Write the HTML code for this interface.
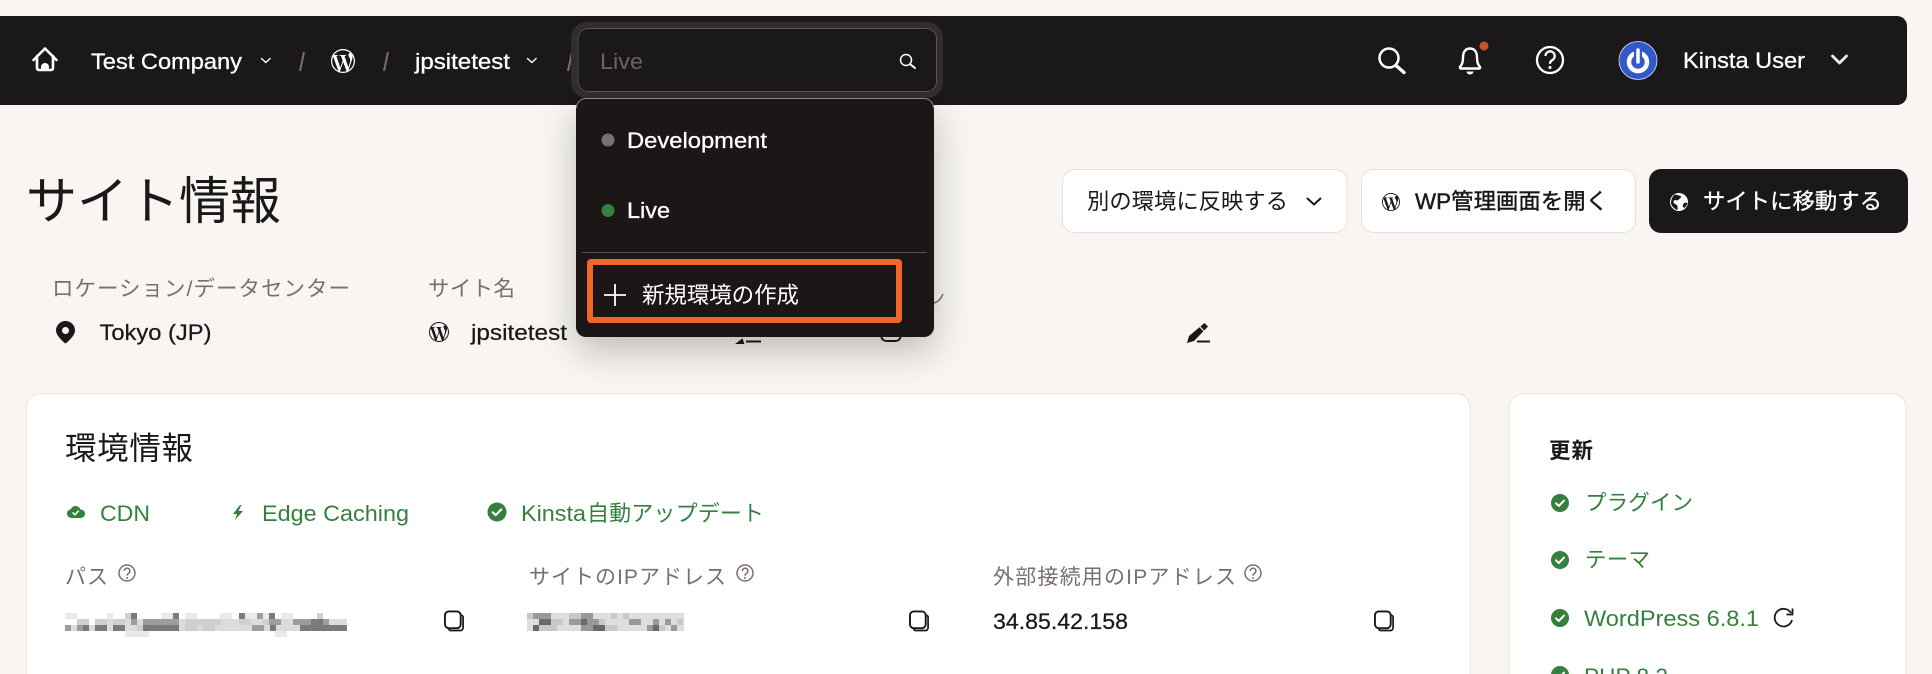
<!DOCTYPE html>
<html lang="ja">
<head>
<meta charset="utf-8">
<title>サイト情報</title>
<style>
html,body{margin:0;padding:0;background:#f8f5f2;width:1932px;height:674px;overflow:hidden}
svg{display:block}
text{font-family:"Liberation Sans","Noto Sans CJK JP",sans-serif}
.w{fill:#fff}
.d{fill:#1a1819}
.g{fill:#34803c}
.m{fill:#7a6e6e}
.bw{stroke:#fff;stroke-width:.3}
.bd{stroke:#1a1819;stroke-width:.25}
.bg{stroke:#34803c;stroke-width:.2}
.bm{stroke:#1a1819;stroke-width:.45}
</style>
</head>
<body>
<svg xmlns="http://www.w3.org/2000/svg" width="1932" height="674" viewBox="0 0 1932 674">
<defs>
<symbol id="wp" viewBox="0 0 24 24"><path fill="currentColor" d="M21.469 6.825c.84 1.537 1.318 3.3 1.318 5.175 0 3.979-2.156 7.456-5.363 9.325l3.295-9.527c.615-1.54.82-2.771.82-3.864 0-.405-.026-.78-.07-1.11m-7.981.105c.647-.03 1.232-.105 1.232-.105.582-.075.514-.93-.067-.899 0 0-1.755.135-2.88.135-1.064 0-2.85-.15-2.85-.15-.585-.03-.661.855-.075.885 0 0 .54.061 1.125.09l1.68 4.605-2.37 7.08L5.354 6.9c.649-.03 1.234-.1 1.234-.1.585-.075.516-.93-.065-.896 0 0-1.746.138-2.874.138-.2 0-.438-.008-.69-.015C4.911 3.15 8.235 1.215 12 1.215c2.809 0 5.365 1.072 7.286 2.833-.046-.003-.091-.009-.141-.009-1.06 0-1.812.923-1.812 1.914 0 .89.513 1.643 1.06 2.531.411.72.89 1.643.89 2.977 0 .915-.354 1.994-.821 3.479l-1.075 3.585-3.9-11.61.001.014zM12 22.784c-1.059 0-2.081-.153-3.048-.437l3.237-9.406 3.315 9.087c.024.053.05.101.078.149-1.12.393-2.325.609-3.582.609M1.211 12c0-1.564.336-3.05.935-4.39L7.29 21.709C3.694 19.96 1.212 16.271 1.211 12M12 0C5.385 0 0 5.385 0 12s5.385 12 12 12 12-5.385 12-12S18.615 0 12 0"/></symbol>
<symbol id="copy" viewBox="0 0 22 22"><path d="M5 18.5v.5a2 2 0 0 0 2 2h10a3 3 0 0 0 3-3V7a2 2 0 0 0-2-2" fill="none" stroke="#1a1819" stroke-width="1.8"/><rect x="1" y="1" width="16.5" height="17.5" rx="4" fill="none" stroke="#1a1819" stroke-width="2"/></symbol>
<symbol id="chk" viewBox="0 0 18 18"><circle cx="9" cy="9" r="9" fill="#34803c"/><path d="M5 9.3l2.8 2.7L13 6.6" fill="none" stroke="#fff" stroke-width="2" stroke-linecap="round" stroke-linejoin="round"/></symbol>
<symbol id="q" viewBox="0 0 18 18"><circle cx="9" cy="9" r="8" fill="none" stroke="#7a6e6e" stroke-width="1.5"/><path d="M6.3 7a2.8 2.8 0 1 1 4.4 2.3c-1 .7-1.7 1.2-1.7 2.3" fill="none" stroke="#7a6e6e" stroke-width="1.5"/><circle cx="9" cy="14" r="1" fill="#7a6e6e"/></symbol>
<filter id="sh" x="-30%" y="-30%" width="160%" height="170%"><feDropShadow dx="0" dy="14" stdDeviation="18" flood-color="#000" flood-opacity=".24"/></filter>
<clipPath id="frame"><rect width="1932" height="674"/></clipPath>
</defs>

<rect width="1932" height="674" fill="#f8f5f2"/>

<!-- nav -->
<path d="M0 16H1897a10 10 0 0 1 10 10V95a10 10 0 0 1-10 10H0z" fill="#1a1819"/>
<g fill="none" stroke="#fff" stroke-width="2.6" stroke-linecap="round" stroke-linejoin="round">
<path d="M33.5 60L45 48.5 56.5 60"/>
<path d="M37 56v12a2 2 0 0 0 2 2h12a2 2 0 0 0 2-2V56"/>
</g>
<path d="M41 70v-3a4 4 0 0 1 8 0v3z" class="w"/>
<text x="91" y="69" font-size="22.500" class="w bw" textLength="151" lengthAdjust="spacingAndGlyphs">Test Company</text>
<path d="M261.500 58.500l4.300 4 4.300-4" fill="none" stroke="#fff" stroke-width="1.400" stroke-linecap="round" stroke-linejoin="round"/>
<path d="M304 52l-4 19M388 52l-4 19" stroke="#7a6e6e" stroke-width="2"/>
<use href="#wp" x="331" y="49" width="24" height="24" color="#fff"/>
<text x="415" y="69" font-size="22.500" class="w bw" textLength="95" lengthAdjust="spacingAndGlyphs">jpsitetest</text>
<path d="M527.500 58.500l4.300 4 4.300-4" fill="none" stroke="#fff" stroke-width="1.400" stroke-linecap="round" stroke-linejoin="round"/>
<path d="M572 52l-4 19" stroke="#7a6e6e" stroke-width="2"/>

<!-- input -->
<rect x="574" y="25" width="366" height="70" rx="13" fill="#1a1819" stroke="#322d2e" stroke-width="6"/>
<rect x="578" y="28.500" width="358.500" height="63" rx="10" fill="#1a1819" stroke="#5f5555" stroke-width="1"/>
<text x="600" y="69" font-size="22.500" fill="#6e6262" textLength="43" lengthAdjust="spacingAndGlyphs">Live</text>
<circle cx="906" cy="60" r="5.500" fill="none" stroke="#fff" stroke-width="1.500"/>
<path d="M910.500 64.500l4.500 3.500" stroke="#fff" stroke-width="2" stroke-linecap="round"/>

<!-- right nav -->
<circle cx="1389" cy="58" r="9.500" fill="none" stroke="#fff" stroke-width="2.500"/>
<path d="M1396 65.500l8 7" stroke="#fff" stroke-width="3.400" stroke-linecap="round"/>
<path d="M1470 48.500c-5 0-7 4-7 9 0 5-1 7-3 9.500-.5.800 0 1.500 1 1.500h18c1 0 1.500-.7 1-1.500-2-2.500-3-4.500-3-9.500 0-5-2-9-7-9z" fill="none" stroke="#fff" stroke-width="2.400" stroke-linejoin="round"/>
<path d="M1466.500 71.500h7a3.500 3 0 0 1-7 0z" class="w"/>
<circle cx="1484" cy="46" r="4.500" fill="#c8502a"/>
<circle cx="1550" cy="60" r="13" fill="none" stroke="#fff" stroke-width="2.300"/>
<path d="M1545.500 56a4.600 4.600 0 1 1 7.300 3.700c-1.800 1.200-2.800 2-2.800 4" fill="none" stroke="#fff" stroke-width="2.300"/>
<circle cx="1550" cy="67.500" r="1.500" class="w"/>
<circle cx="1638" cy="60.500" r="19" fill="#3358c8" stroke="#dfe3f2" stroke-width=".8"/>
<circle cx="1638" cy="62" r="9" fill="none" stroke="#fff" stroke-width="4.500"/>
<path d="M1638 47v11" stroke="#3358c8" stroke-width="8"/>
<path d="M1638 50v12" stroke="#fff" stroke-width="3.500" stroke-linecap="round"/>
<text x="1683" y="68" font-size="22.500" class="w bw" textLength="122" lengthAdjust="spacingAndGlyphs">Kinsta User</text>
<path d="M1832.500 56l7 7 7-7" fill="none" stroke="#eee8e4" stroke-width="2.800" stroke-linecap="round" stroke-linejoin="round"/>

<!-- title -->
<text x="26" y="219" font-size="51" class="d" textLength="255">サイト情報</text>

<!-- labels -->
<text x="52" y="296" font-size="21.500" class="m" textLength="298">ロケーション/データセンター</text>
<text x="428" y="296" font-size="21.500" class="m" textLength="87">サイト名</text>
<path d="M65.500 321c-5 0-9.500 4-9.500 9.500 0 6 9.500 13 9.500 13s9.500-7 9.500-13c0-5.500-4.500-9.500-9.500-9.500z" class="d"/>
<circle cx="65.500" cy="330.500" r="3.500" fill="#f8f5f2"/>
<text x="99.500" y="340" font-size="22.500" class="d bd" textLength="112" lengthAdjust="spacingAndGlyphs">Tokyo (JP)</text>
<use href="#wp" x="429" y="322" width="20" height="20" color="#1a1819"/>
<text x="471" y="340" font-size="22.500" class="d bd" textLength="96" lengthAdjust="spacingAndGlyphs">jpsitetest</text>

<!-- fragments behind dropdown -->
<path d="M738 343l4-3 1 3zM746 341.500h15" stroke="#1a1819" stroke-width="2" fill="#1a1819"/>
<path d="M881 336c1 4 3 5 6 5h8c3 0 5-1 6-5" stroke="#1a1819" stroke-width="2" fill="none"/>
<path d="M934 303c4-1 7-4 9-9" stroke="#7a6e6e" stroke-width="1.500" fill="none"/>

<!-- edit icon -->
<path d="M1204.500 323l3.500 3.500-14 14.500-7 2 2-7z" class="d"/>
<path d="M1199.500 326.500l4.500 4.500" stroke="#f8f5f2" stroke-width="1.200"/>
<path d="M1197 341.500h13" stroke="#1a1819" stroke-width="2"/>

<!-- buttons -->
<rect x="1062.500" y="169.500" width="284.500" height="63" rx="12" fill="#fff" stroke="#e9e0da"/>
<text x="1087" y="209" font-size="22.300" class="d" textLength="201">別の環境に反映する</text>
<path d="M1307.500 198.500l6.500 6 6.500-6" fill="none" stroke="#1a1819" stroke-width="2" stroke-linecap="round" stroke-linejoin="round"/>
<rect x="1361.500" y="169.500" width="274" height="63" rx="12" fill="#fff" stroke="#e9e0da"/>
<use href="#wp" x="1382" y="193" width="18" height="18" color="#1a1819"/>
<text x="1415" y="209" font-size="22.300" class="d bm" textLength="193">WP管理画面を開く</text>
<rect x="1649" y="169" width="259" height="64" rx="12" fill="#1a1819"/>
<circle cx="1679" cy="202" r="9" class="w"/>
<path d="M1675 194.500c2 1 5 .5 6 2 .5 1.500-2 2-2.500 3.500-1 1-3-.5-4.500.5-1 1-.5 3 1 3.500 1.500.5 2.500 1 2.500 3 0 1.500.5 2.500-.5 3-3-1.500-5-3.500-6-6.500 0-4 1.500-7.500 4-9z M1684 203c1.500-.5 3-.5 3.500 0-.5 2-1.500 4-3.500 5-1.500-1-1.500-4 0-5z" fill="#1a1819"/>
<text x="1703" y="209" font-size="22.300" class="w bw" textLength="179">サイトに移動する</text>

<!-- card 1 -->
<path d="M26.500 674V407.500a14 14 0 0 1 14-14H1456a14 14 0 0 1 14 14V674" fill="#fff" stroke="#ede4de"/>
<text x="65" y="459" font-size="31.500" class="d" textLength="128">環境情報</text>

<path d="M72 518c-3 0-5-2-5-4.500 0-2 1.500-3.700 3.500-4 1-2 2.700-3.500 5-3.500s4.200 1.300 5 3.500c2.500 0 4.500 2 4.500 4.300 0 2.500-2 4.200-4.500 4.200z" class="g"/>
<path d="M72.500 512.500l2.300 2.200 4-4" fill="none" stroke="#fff" stroke-width="1.500"/>
<text x="100" y="521" font-size="22.500" class="g" textLength="50" lengthAdjust="spacingAndGlyphs">CDN</text>
<path d="M240 505l-7 9h4l-2 6 8-9h-4.500l3-6z" class="g"/>
<text x="262" y="521" font-size="22.500" class="g" textLength="147" lengthAdjust="spacingAndGlyphs">Edge Caching</text>
<use href="#chk" x="487.500" y="502.500" width="19" height="19"/>
<text x="521" y="521" font-size="22.500" class="g" textLength="65" lengthAdjust="spacingAndGlyphs">Kinsta</text>
<text x="587" y="521" font-size="22" class="g" textLength="177">自動アップデート</text>

<text x="65" y="584" font-size="21" class="m" textLength="43">パス</text>
<use href="#q" x="118" y="564" width="18" height="18"/>
<text x="529" y="584" font-size="21" class="m" textLength="197">サイトのIPアドレス</text>
<use href="#q" x="736" y="564" width="18" height="18"/>
<text x="993" y="584" font-size="21" class="m" textLength="243">外部接続用のIPアドレス</text>
<use href="#q" x="1244" y="564" width="18" height="18"/>

<!-- mosaic 1 -->
<g shape-rendering="crispEdges">
<rect x="107" y="619" width="240" height="12" fill="#dcdcdc"/>
<rect x="65" y="625" width="42" height="6" fill="#dcdcdc"/>
<g fill="#eaeaea"><rect x="65" y="613" width="12" height="6"/><rect x="107" y="613" width="6" height="6"/><rect x="161" y="613" width="12" height="6"/><rect x="185" y="613" width="12" height="6"/><rect x="220" y="613" width="12" height="6"/><rect x="245" y="613" width="12" height="6"/><rect x="263" y="613" width="6" height="6"/><rect x="281" y="613" width="12" height="6"/><rect x="125" y="631" width="24" height="6"/><rect x="275" y="631" width="12" height="6"/></g>
<g fill="#cfcfcf"><rect x="125" y="613" width="6" height="6"/><rect x="317" y="613" width="6" height="6"/><rect x="77" y="619" width="12" height="6"/><rect x="95" y="619" width="12" height="6"/><rect x="113" y="619" width="12" height="6"/><rect x="185" y="619" width="36" height="6"/><rect x="239" y="619" width="12" height="6"/><rect x="263" y="619" width="12" height="6"/><rect x="137" y="625" width="6" height="6"/><rect x="185" y="625" width="12" height="6"/><rect x="203" y="625" width="12" height="6"/></g>
<g fill="#9d9d9d"><rect x="257" y="613" width="6" height="6"/><rect x="131" y="619" width="6" height="6"/><rect x="143" y="619" width="36" height="6"/><rect x="269" y="619" width="12" height="6"/><rect x="293" y="619" width="36" height="6"/><rect x="65" y="625" width="6" height="6"/><rect x="77" y="625" width="6" height="6"/><rect x="252" y="625" width="12" height="6"/></g>
<g fill="#7a7a7a"><rect x="131" y="613" width="6" height="6"/><rect x="173" y="613" width="6" height="6"/><rect x="239" y="613" width="6" height="6"/><rect x="269" y="613" width="6" height="6"/><rect x="311" y="619" width="12" height="6"/><rect x="83" y="625" width="6" height="6"/><rect x="95" y="625" width="12" height="6"/><rect x="113" y="625" width="12" height="6"/><rect x="143" y="625" width="36" height="6"/><rect x="270" y="625" width="6" height="6"/><rect x="300" y="625" width="47" height="6"/></g>
</g>

<use href="#copy" x="444" y="610" width="21" height="22"/>

<!-- mosaic 2 -->
<g shape-rendering="crispEdges">
<rect x="527" y="613" width="157" height="18" fill="#dedede"/>
<g fill="#c8c8c8"><rect x="527" y="613" width="6" height="6"/><rect x="569" y="613" width="12" height="6"/><rect x="611" y="613" width="6" height="6"/><rect x="623" y="613" width="6" height="6"/><rect x="551" y="619" width="12" height="6"/><rect x="599" y="619" width="6" height="6"/><rect x="677" y="619" width="6" height="6"/><rect x="539" y="625" width="18" height="6"/><rect x="605" y="625" width="12" height="6"/><rect x="659" y="625" width="6" height="6"/></g>
<g fill="#999"><rect x="533" y="613" width="18" height="6"/><rect x="581" y="613" width="12" height="6"/><rect x="569" y="619" width="12" height="6"/><rect x="587" y="619" width="12" height="6"/><rect x="629" y="619" width="12" height="6"/><rect x="653" y="619" width="6" height="6"/><rect x="665" y="619" width="6" height="6"/><rect x="581" y="625" width="12" height="6"/><rect x="647" y="625" width="6" height="6"/><rect x="671" y="625" width="6" height="6"/></g>
<g fill="#6a6a6a"><rect x="539" y="619" width="12" height="6"/><rect x="581" y="619" width="6" height="6"/><rect x="533" y="625" width="6" height="6"/><rect x="593" y="625" width="12" height="6"/><rect x="653" y="625" width="6" height="6"/></g>
</g>

<use href="#copy" x="909" y="610" width="21" height="22"/>
<text x="993" y="629" font-size="22" class="d bd" textLength="135" lengthAdjust="spacingAndGlyphs">34.85.42.158</text>
<use href="#copy" x="1374" y="610" width="21" height="22"/>

<!-- card 2 -->
<path d="M1509.500 674V407.500a14 14 0 0 1 14-14H1892a14 14 0 0 1 14 14V674" fill="#fff" stroke="#ede4de"/>
<text x="1549" y="458" font-size="21.500" font-weight="700" class="d" textLength="44">更新</text>
<use href="#chk" x="1551" y="494" width="18" height="18"/>
<text x="1585" y="510" font-size="21.500" class="g" textLength="108">プラグイン</text>
<use href="#chk" x="1551" y="551" width="18" height="18"/>
<text x="1585" y="567" font-size="21.500" class="g" textLength="65">テーマ</text>
<use href="#chk" x="1551" y="609" width="18" height="18"/>
<text x="1584" y="626" font-size="22.500" class="g" textLength="175" lengthAdjust="spacingAndGlyphs">WordPress 6.8.1</text>
<path d="M1791 613a8.800 8.800 0 1 0 1 7" fill="none" stroke="#1a1819" stroke-width="1.800"/>
<path d="M1792.500 608.500v6h-6" fill="none" stroke="#1a1819" stroke-width="1.800"/>
<g clip-path="url(#frame)">
<use href="#chk" x="1551" y="666" width="18" height="18"/>
<text x="1584" y="684" font-size="22.500" class="g" textLength="84" lengthAdjust="spacingAndGlyphs">PHP 8.2</text>
</g>

<!-- dropdown -->
<rect x="576" y="98" width="358" height="239" rx="10" fill="#1a1819" filter="url(#sh)"/>
<path d="M576.500 108a9.500 9.500 0 0 1 9.500-9.500H924a9.500 9.500 0 0 1 9.500 9.500" fill="none" stroke="#8f8580" stroke-width="1"/>
<circle cx="608" cy="140" r="6.500" fill="#7b6e6f"/>
<text x="627" y="148" font-size="22.500" class="w bw" textLength="140" lengthAdjust="spacingAndGlyphs">Development</text>
<circle cx="608" cy="210.500" r="6.500" fill="#34803c"/>
<text x="627" y="218" font-size="22.500" class="w bw" textLength="43" lengthAdjust="spacingAndGlyphs">Live</text>
<path d="M582 252.500H927" stroke="#5a5050" stroke-width="1"/>
<rect x="590" y="262" width="309" height="58" rx="1" fill="none" stroke="#f0652a" stroke-width="6"/>
<path d="M604 295h22M615 284v22" stroke="#fff" stroke-width="1.800"/>
<text x="642" y="303" font-size="22.500" class="w" textLength="157">新規環境の作成</text>
</svg>
</body>
</html>
